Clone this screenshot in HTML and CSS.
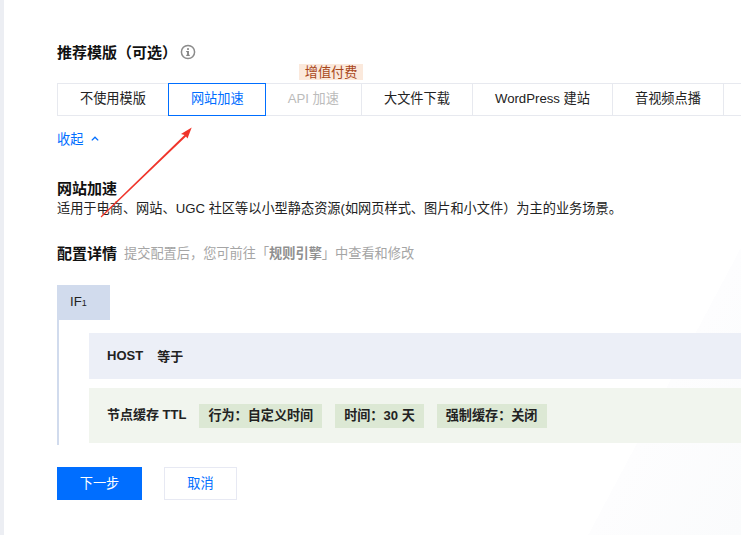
FILE: index.html
```html
<!DOCTYPE html>
<html lang="zh-CN">
<head>
<meta charset="utf-8">
<title>推荐模版</title>
<link rel="stylesheet" href="styles.css">
</head>
<body>
<div class="page">
  <main class="main">
    <h2 class="title">推荐模版（可选）<svg class="info" viewBox="0 0 16 16" width="16" height="16"><circle cx="8" cy="8" r="6.6" fill="none" stroke="#8b8b8b" stroke-width="1.5"/><rect x="7.1" y="7" width="1.8" height="4.6" fill="#808080"/><rect x="6.2" y="7" width="2" height="1.1" fill="#808080"/><rect x="6.2" y="10.8" width="3.6" height="1.1" fill="#808080"/><rect x="7.1" y="4.2" width="1.8" height="1.7" fill="#808080"/></svg></h2>
    <div class="tabs">
      <div class="tab">不使用模版</div>
      <div class="tab tab-active">网站加速</div>
      <div class="tab tab-disabled">API 加速<span class="paid">增值付费</span></div>
      <div class="tab">大文件下载</div>
      <div class="tab">WordPress 建站</div>
      <div class="tab">音视频点播</div>
      <div class="tab tab-rest"></div>
    </div>
    <a class="collapse">收起<svg class="chev" viewBox="0 0 8 5" width="8" height="5"><path d="M.8 4.4 4 1.2l3.2 3.2" fill="none" stroke="#006eff" stroke-width="1.3"/></svg></a>
    <h3 class="sub">网站加速</h3>
    <p class="desc">适用于电商、网站、UGC 社区等以小型静态资源(如网页样式、图片和小文件）为主的业务场景。</p>
    <div class="config-head"><span class="sub-inline">配置详情</span><span class="hint">提交配置后，您可前往「<b>规则引擎</b>」中查看和修改</span></div>
    <div class="if-tag">IF<small>1</small></div>
    <div class="if-body">
      <div class="row row-host"><b>HOST</b><b class="op">等于</b></div>
      <div class="row row-cache">
        <b class="cache-name">节点缓存 TTL</b>
        <span class="chip">行为：自定义时间</span>
        <span class="chip">时间：30 天</span>
        <span class="chip">强制缓存：关闭</span>
      </div>
    </div>
    <div class="actions">
      <button class="btn btn-primary">下一步</button>
      <button class="btn btn-cancel">取消</button>
    </div>
  </main>
  <svg class="arrow" viewBox="0 0 741 535" width="741" height="535"><polygon points="100.6,216.6 184.5,135 181,134 191.7,127.5 187.5,138.5 186,136.5 101.4,217.4" fill="#f0352b"/></svg>
</div>
</body>
</html>
```
FILE: styles.css
```css
* { box-sizing: border-box; }
html, body { margin: 0; height: 100%; }
body {
  font-family: "Liberation Sans", "Noto Sans CJK SC", sans-serif;
  font-size: 13.2px;
  color: #222;
}
.page {
  position: relative;
  width: 741px;
  height: 535px;
  overflow: hidden;
  border-left: 4px solid #eceef3;
  background: linear-gradient(118deg, #fff 767px, #fdfdfe 767px, #fafbfc 100%);
}
.main { padding: 42px 0 0 53px; }
.title {
  display: flex;
  align-items: center;
  height: 20px;
  margin: 0;
  padding-bottom: 2px;
  font-size: 15px;
  font-weight: 700;
  color: #111;
}
.info { margin: 2px 0 0 3px; }
.tabs {
  display: flex;
  height: 33px;
  margin-top: 21px;
}
.tab {
  position: relative;
  flex: none;
  display: flex;
  align-items: center;
  margin-right: -1px;
  padding: 0 22px 5px;
  border: 1px solid #e7e9ef;
  white-space: nowrap;
}
.tab-active { z-index: 1; padding-right: 21px; color: #006eff; border-color: #006eff; }
.tab-disabled { color: #bbb; }
.tab-rest { width: 60px; }
.paid {
  position: absolute;
  top: -20px;
  right: -2px;
  padding: 0 5.5px;
  height: 16px;
  line-height: 17px;
  background: #fbe9dc;
  color: #a9471a;
}
.collapse {
  display: flex;
  align-items: center;
  height: 18px;
  margin-top: 13px;
  color: #006eff;
}
.chev { margin-left: 8px; }
.sub {
  margin: 32px 0 0;
  height: 20px;
  line-height: 20px;
  font-size: 15px;
  font-weight: 700;
  color: #111;
}
.desc { margin: 1px 0 0; height: 18px; line-height: 18px; color: #222; white-space: nowrap; }
.config-head {
  display: flex;
  align-items: center;
  height: 20px;
  margin-top: 24px;
}
.sub-inline { font-size: 15px; font-weight: 700; color: #111; }
.hint { margin-left: 7px; color: #a5a5a5; }
.hint b { color: #8f8f8f; }
.if-tag {
  width: 53px;
  height: 35px;
  margin-top: 23px;
  padding-left: 13px;
  line-height: 33px;
  background: #d1dbed;
  color: #222;
}
.if-tag small { font-size: 9px; }
.if-body {
  height: 125px;
  padding: 13px 0 0 30px;
  border-left: 2px solid #d1dbed;
}
.row { display: flex; align-items: center; padding-left: 18px; font-size: 13px; color: #222; }
.row b { font-weight: 700; }
.row-host { height: 46px; padding-bottom: 2px; background: #eceff7; }
.op { margin-left: 14px; }
.row-cache { height: 55px; margin-top: 9px; background: #f1f5ee; }
.cache-name { margin: 0 13px 4px 0; }
.chip {
  height: 24px;
  line-height: 24px;
  margin-right: 13px;
  padding: 0 9px;
  background: #dce8d4;
  font-weight: 700;
  font-size: 13.1px;
  white-space: nowrap;
}
.chip:last-child { padding-right: 10px; }
.actions { display: flex; gap: 22px; margin-top: 22px; }
.btn {
  height: 33px;
  padding: 0 0 3px;
  font: inherit;
  border-radius: 0;
  cursor: pointer;
}
.btn-primary { width: 85px; background: #006eff; border: 0; color: #fff; }
.btn-cancel { width: 73px; background: #fff; border: 1px solid #e7e9f3; color: #006eff; }
.arrow { position: absolute; left: -4px; top: 0; pointer-events: none; }
```
